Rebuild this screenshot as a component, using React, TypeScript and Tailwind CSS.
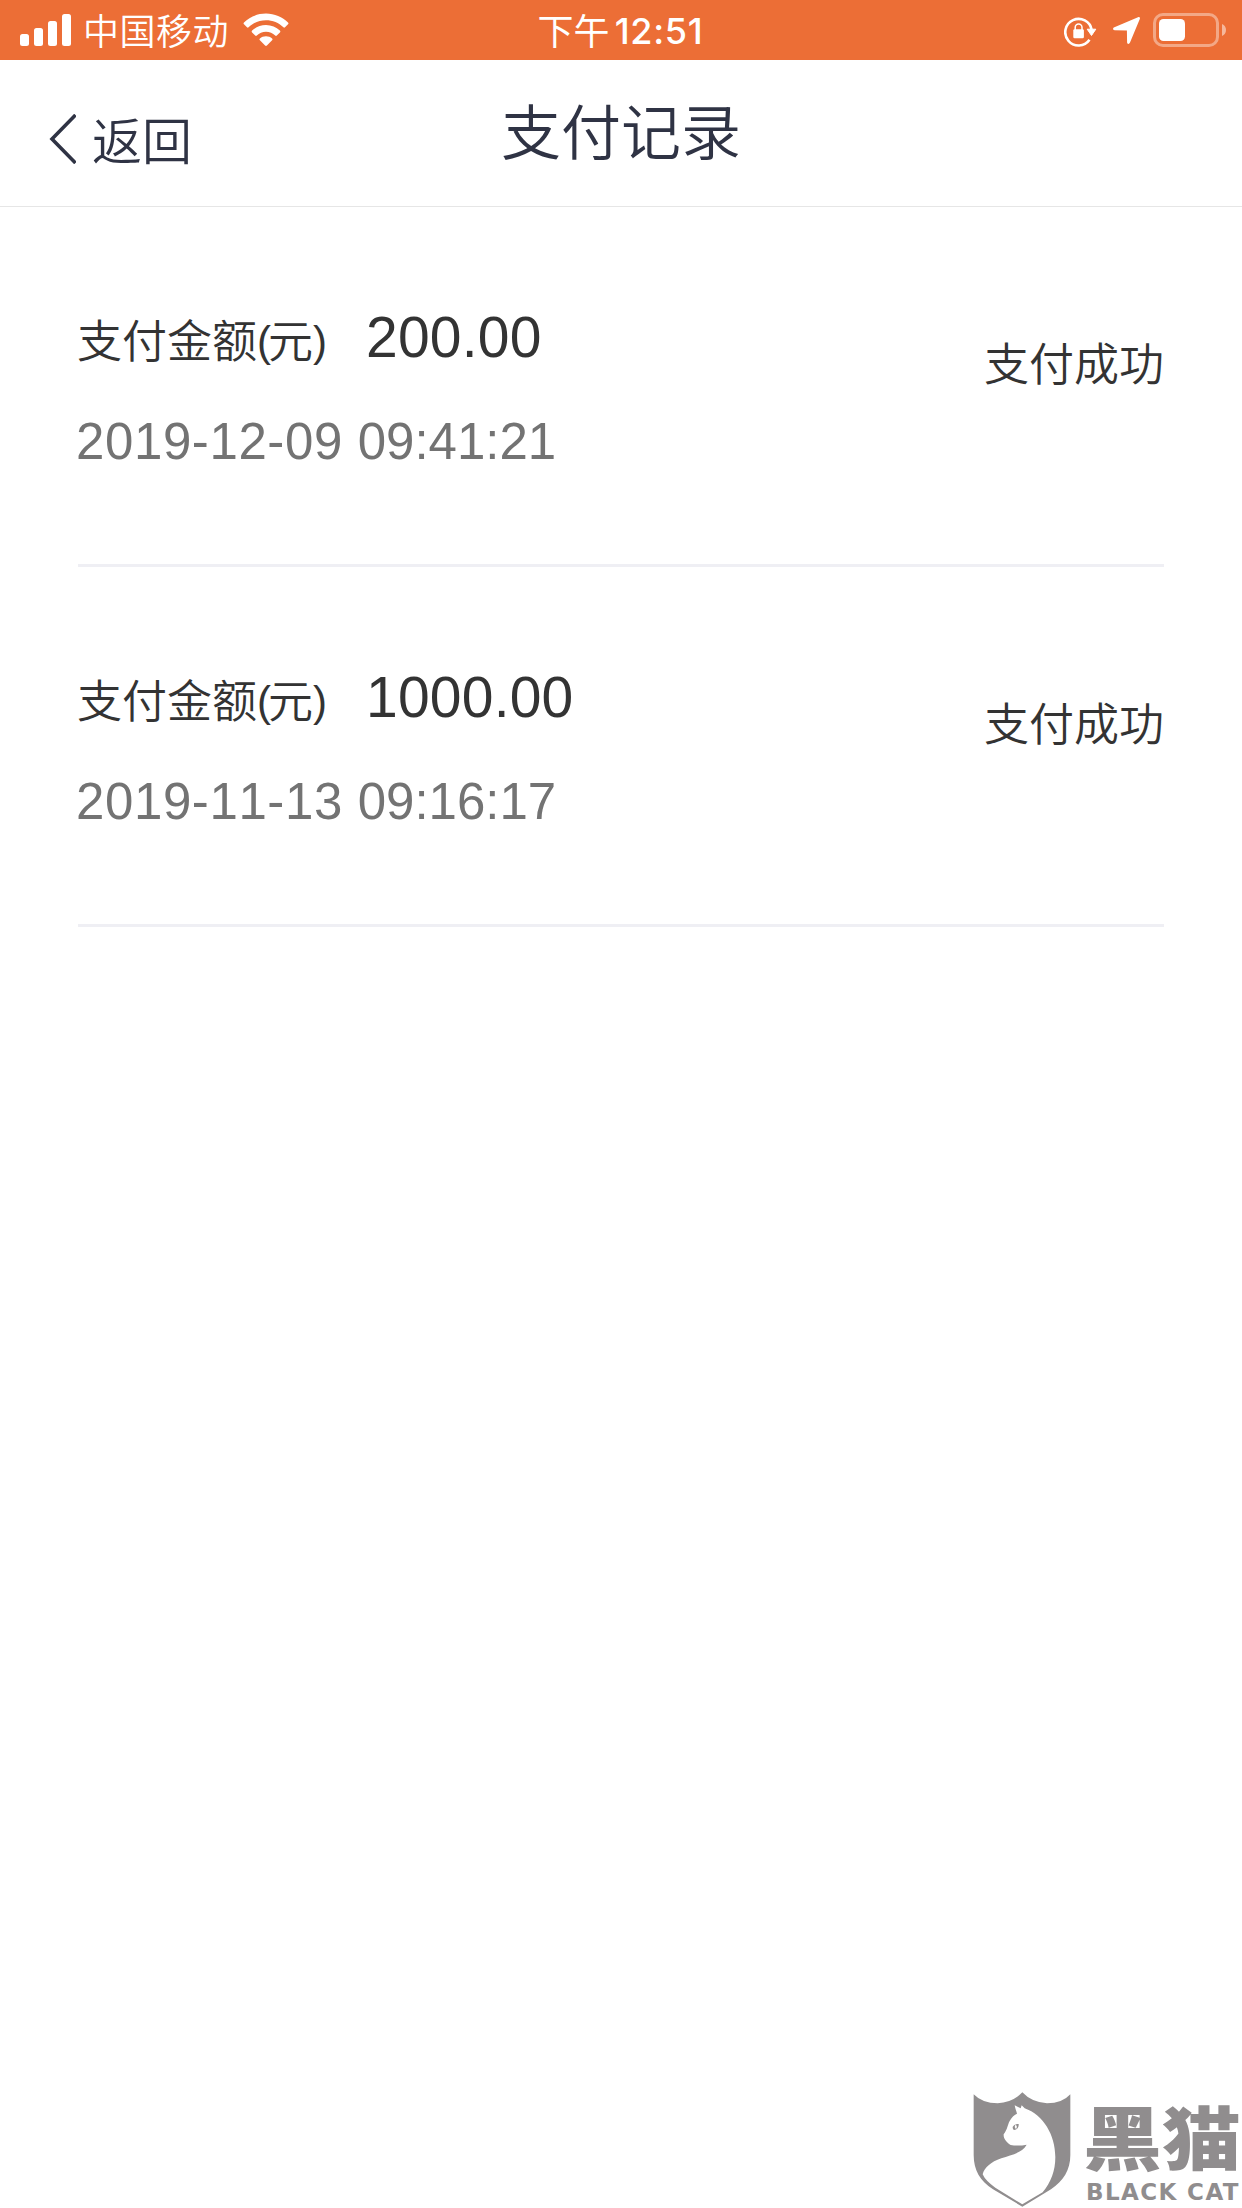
import React from 'react';

interface Payment {
  amount: string;
  date: string;
  time: string;
  status: string;
}

const PAYMENTS: Payment[] = [
  { amount: '200.00', date: '2019-12-09', time: '09:41:21', status: '支付成功' },
  { amount: '1000.00', date: '2019-11-13', time: '09:16:17', status: '支付成功' },
];

const StatusBar: React.FC = () => (
  <div className="grid grid-cols-[1fr_auto_1fr] items-center h-[60px] bg-[#ec6e36] text-white">
    <div className="flex items-center pl-5">
      <svg className="w-[51px] h-8" viewBox="0 0 51 32" fill="currentColor">
        <rect x="0" y="20" width="9" height="12" rx="2.5" />
        <rect x="14" y="14" width="9" height="18" rx="2.5" />
        <rect x="28" y="7" width="9" height="25" rx="2.5" />
        <rect x="42" y="0" width="9" height="32" rx="2.5" />
      </svg>
      <span className="ml-[12px] pb-px text-[36px] leading-[59px] tracking-[0.5px] font-[350]">中国移动</span>
      <svg className="ml-[14px] w-[46px] h-[34px]" viewBox="0 0 46 34" fill="currentColor">
        <path d="M23 0.5C31.5 0.5 39.5 4 45 9.5c.6.6.6 1.2 0 1.8l-3 3c-.5.5-1.1.5-1.6 0C35.8 9.8 29.7 7.2 23 7.2S10.2 9.8 5.6 14.3c-.5.5-1.1.5-1.6 0l-3-3c-.6-.6-.6-1.2 0-1.8C6.5 4 14.5.5 23 .5z" />
        <path d="M23 12c5.4 0 10.2 2.2 13.9 5.6.6.6.6 1.2 0 1.8l-3.1 3.1c-.5.5-1.1.5-1.6 0C29.8 20.2 26.6 18.7 23 18.7s-6.8 1.5-9.2 3.8c-.5.5-1.1.5-1.6 0l-3.1-3.1c-.6-.6-.6-1.2 0-1.8C12.8 14.2 17.6 12 23 12z" />
        <path d="M23 23.2c2.4 0 4.5.9 6.1 2.3.6.6.6 1.1 0 1.7l-5.2 5.3c-.6.6-1.2.6-1.8 0l-5.2-5.3c-.6-.6-.6-1.1 0-1.7 1.6-1.4 3.7-2.3 6.1-2.3z" />
      </svg>
    </div>
    <div className="flex items-center pr-px">
      <span className="pb-[2px] text-[36px] leading-[58px]">下午</span>
      <span className="ml-[5px] mt-[2px] font-['Inter'] text-[36px] leading-[56px] tracking-[0.7px] font-medium">12:51</span>
    </div>
    <div className="flex items-center justify-end pr-[15px]">
      <svg className="mt-[3px] w-[33px] h-[30px]" viewBox="0 0 33 30" fill="none">
        <path d="M25.5 22.8A13.3 13.3 0 1 1 27.7 13" stroke="currentColor" strokeWidth="2.6" />
        <path d="M23.2 12.2h8.6l-4.3 6.3z" fill="currentColor" stroke="currentColor" strokeLinejoin="round" />
        <rect x="9.3" y="12.3" width="10.6" height="9" rx="1.3" fill="currentColor" />
        <path d="M11.2 13V10.5a3.4 3.4 0 0 1 6.8 0V13" stroke="currentColor" strokeWidth="1.5" />
      </svg>
      <svg className="ml-[15px] mt-px w-[29px] h-[29px]" viewBox="0 0 29 29" fill="currentColor">
        <path d="M26 1.2c1.5-.6 2.4.3 1.8 1.8L18 26.6c-.8 1.9-2.9 1.7-2.9-.3L14.9 14.5 2.7 14.2c-2 0-2.2-2.1-.3-2.9z" />
      </svg>
      <svg className="ml-[12px] w-[74px] h-[34px]" viewBox="0 0 74 34" fill="currentColor">
        <rect x="1.5" y="1.5" width="63" height="31" rx="8.5" fill="none" stroke="currentColor" strokeWidth="3" opacity="0.4" />
        <rect x="6" y="6" width="26" height="22" rx="4.5" />
        <path d="M69 11c2.5 1 4 3.3 4 6s-1.5 5-4 6z" opacity="0.5" />
      </svg>
    </div>
  </div>
);

const NavBar: React.FC = () => (
  <header className="grid grid-cols-[1fr_auto_1fr] items-start h-[147px] border-b border-[#e6e6e6] text-[#2f3344]">
    <button className="flex items-center pl-[49px] pt-[48px]">
      <svg className="mt-[2px] w-[27px] h-[50px]" viewBox="0 0 27 50" fill="none" stroke="currentColor" strokeWidth="3.6">
        <path d="M26.5 1L3 25l23.5 24" />
      </svg>
      <span className="ml-[16px] text-[50px] leading-[60px] font-[350]">返回</span>
    </button>
    <h1 className="pt-[29px] text-[60px] leading-[80px] font-[350]">支付记录</h1>
  </header>
);

const PaymentRow: React.FC<{ payment: Payment }> = ({ payment }) => (
  <li className="flex justify-between h-[360px] border-b-[3px] border-[#efeff4]">
    <div className="pt-[90px] [font-kerning:none]">
      <div className="flex items-start h-[80px] leading-[80px]">
        <span className="-ml-px mt-[2px] text-[45px] font-[350]">
          支付金额<span className="font-['Liberation_Sans'] text-[42px] tracking-[-3px] align-[2px]">(</span>元<span className="font-['Liberation_Sans'] text-[42px] tracking-[-3px] align-[2px]">)</span>
        </span>
        <span className="ml-[42px] font-['Liberation_Sans'] text-[57px] tracking-[0.2px]">{payment.amount}</span>
      </div>
      <div className="-ml-[2px] mt-[35px] font-['Liberation_Sans'] text-[51px] leading-[60px] text-[#737373]">
        <span className="tracking-[0.6px]">{payment.date} </span>
        <span>{payment.time}</span>
      </div>
    </div>
    <span className="pt-[125px] text-[45px] leading-[60px] font-[350]">{payment.status}</span>
  </li>
);

const BlackCatLogo: React.FC = () => (
  <div className="flex items-start w-[269px] h-[117px] text-[#908d8e]">
    <svg className="w-[98px] h-[117px] shrink-0" viewBox="38 36 294 351" fill="currentColor">
      <path d="M40 46Q66 73 112 73Q158 70 186 40Q214 70 260 73Q306 73 330 46V228C330 273 309 306 272 331L186 383L98 331C59 306 40 273 40 228z" />
      <path
        fill="#fff"
        d="M163 79L181 88L184 79L193 88C249 108 285 168 285 234C285 275 272 310 247 340L186 376L105 326C86 313 73 300 67 286C72 266 91 249 123 238C153 227 184 223 199 197C184 200 166 201 151 198C137 189 129 178 130 166C142 150 141 139 148 126C154 114 163 107 170 104C168 96 164 87 163 79z"
      />
      <path d="M157 144C161 136 168 134 175 135C176 145 170 152 161 153C158 151 157 148 157 144z" />
      <path fill="#fff" d="M166 136L170 143L167 151L163 144z" />
    </svg>
    <div className="flex flex-col items-start ml-[14px] whitespace-nowrap">
      <span className="-ml-[2px] h-[87px] text-[79px] leading-[87px] font-black origin-center scale-y-[0.88]">黑猫</span>
      <span className="ml-px font-['DejaVu_Sans'] text-[23px] leading-[28px] font-bold tracking-[1.4px]">BLACK CAT</span>
    </div>
  </div>
);

export default function App() {
  return (
    <div className="relative w-[1242px] h-[2208px] overflow-hidden bg-white font-['Noto_Sans_CJK_SC',sans-serif] text-[#333333]">
      <StatusBar />
      <NavBar />
      <ul className="px-[78px]">
        {PAYMENTS.map((payment) => (
          <PaymentRow key={payment.date} payment={payment} />
        ))}
      </ul>
      <div className="absolute right-0 bottom-0">
        <BlackCatLogo />
      </div>
    </div>
  );
}
